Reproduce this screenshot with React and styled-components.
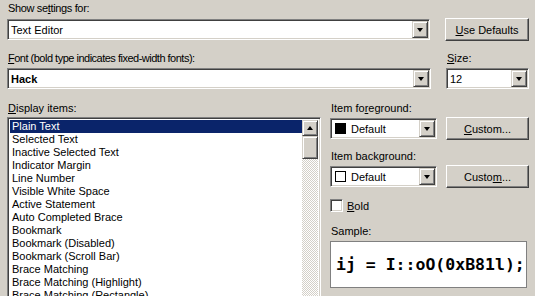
import React from "react";
import styled, { createGlobalStyle } from "styled-components";

const Global = createGlobalStyle`
  html, body { margin: 0; padding: 0; background: #d4d0c8; }
  body { width: 535px; height: 296px; overflow: hidden; }
  * { box-sizing: border-box; }
`;

const FONT = `"Liberation Sans", Arial, sans-serif`;

const Page = styled.div`
  width: 535px;
  height: 296px;
  overflow: hidden;
  padding: 2px 6px 0 7px;
  font-family: ${FONT};
  font-size: 11px;
  color: #000;
  background: #d4d0c8;
  display: flex;
  flex-direction: column;
`;

const Label = styled.div`
  height: 13px;
  line-height: 13px;
  padding-left: 1px;
  margin-top: ${(p) => p.$mt ?? 0}px;
  margin-bottom: ${(p) => p.$mb ?? 3}px;
  letter-spacing: ${(p) => p.$ls ?? 0}px;
  white-space: nowrap;
`;

const U = styled.span`
  text-decoration: underline;
  text-underline-offset: 1px;
`;

const Row = styled.div`
  display: flex;
  align-items: ${(p) => p.$align || "center"};
  gap: ${(p) => p.$gap ?? 15}px;
  margin-top: ${(p) => p.$mt ?? 0}px;
`;

const Col = styled.div`
  display: flex;
  flex-direction: column;
  flex: ${(p) => (p.$w ? `0 0 ${p.$w}px` : "1 1 auto")};
  min-width: 0;
`;

const ComboBox = styled.div`
  height: 21px;
  width: ${(p) => (p.$w ? `${p.$w}px` : "auto")};
  flex: ${(p) => (p.$w ? "0 0 auto" : "1 1 auto")};
  background: #fff;
  border: 1px solid;
  border-color: #808080 #fff #fff #808080;
  box-shadow: inset 1px 1px #404040, inset -1px -1px #d4d0c8;
  padding: 1px;
  display: flex;
  align-items: center;
`;

const ComboText = styled.div`
  flex: 1;
  padding-left: ${(p) => p.$pl ?? 2}px;
  font-weight: ${(p) => (p.$bold ? 700 : 400)};
  display: flex;
  align-items: center;
  gap: 5px;
  white-space: nowrap;
`;

const DropBtn = styled.div`
  width: 16px;
  height: 17px;
  background: #d4d0c8;
  border: 1px solid;
  border-color: #d4d0c8 #404040 #404040 #d4d0c8;
  box-shadow: inset 1px 1px #fff, inset -1px -1px #808080;
  display: flex;
  align-items: center;
  justify-content: center;
  &::after {
    content: "";
    width: 0;
    height: 0;
    border-left: 3.5px solid transparent;
    border-right: 3.5px solid transparent;
    border-top: 4px solid #000;
    margin-top: 1px;
  }
`;

const Swatch = styled.span`
  width: 11px;
  height: 11px;
  border: 1px solid #000;
  background: ${(p) => p.$color};
  display: inline-block;
`;

const Button = styled.div`
  height: 23px;
  width: ${(p) => p.$w}px;
  flex: 0 0 auto;
  background: #d4d0c8;
  border: 1px solid;
  border-color: #fff #404040 #404040 #fff;
  box-shadow: inset -1px -1px #808080;
  display: flex;
  align-items: center;
  justify-content: center;
  white-space: nowrap;
`;

const ListBox = styled.div`
  flex: 0 0 314px;
  height: 190px;
  background: #fff;
  border: 1px solid;
  border-color: #808080 #fff #fff #808080;
  box-shadow: inset 1px 1px #404040, inset -1px -1px #d4d0c8;
  padding: 2px;
  display: flex;
`;

const Items = styled.div`
  flex: 1;
  display: flex;
  flex-direction: column;
`;

const Item = styled.div`
  height: 13px;
  line-height: 13px;
  padding-left: 2px;
  white-space: nowrap;
  background: ${(p) => (p.$sel ? "#0a246a" : "transparent")};
  color: ${(p) => (p.$sel ? "#fff" : "#000")};
`;

const ScrollBar = styled.div`
  width: 16px;
  display: flex;
  flex-direction: column;
  background-color: #d4d0c8;
  background-image: repeating-conic-gradient(#fff 0 25%, #d4d0c8 0 50%);
  background-size: 2px 2px;
`;

const ScrollBtn = styled.div`
  width: 16px;
  height: ${(p) => p.$h}px;
  background: #d4d0c8;
  border: 1px solid;
  border-color: #d4d0c8 #404040 #404040 #d4d0c8;
  box-shadow: inset 1px 1px #fff, inset -1px -1px #808080;
  display: flex;
  align-items: center;
  justify-content: center;
  ${(p) =>
    p.$arrow
      ? `&::after {
    content: "";
    width: 0; height: 0;
    border-left: 3.5px solid transparent;
    border-right: 3.5px solid transparent;
    border-bottom: 4px solid #000;
    margin-bottom: 1px;
  }`
      : ""}
`;

const Right = styled.div`
  flex: 1;
  display: flex;
  flex-direction: column;
`;

const CheckRow = styled.div`
  display: flex;
  align-items: center;
  gap: 4px;
  margin-top: 11px;
  height: 13px;
`;

const CheckBox = styled.span`
  width: 13px;
  height: 13px;
  background: #fff;
  border: 1px solid;
  border-color: #808080 #fff #fff #808080;
  box-shadow: inset 1px 1px #404040, inset -1px -1px #d4d0c8;
  display: inline-block;
`;

const Sample = styled.div`
  height: 47px;
  width: 197px;
  background: #fff;
  border: 1px solid #808080;
  display: flex;
  align-items: center;
  padding-left: 5px;
  font-family: "DejaVu Sans Mono", monospace;
  font-weight: 700;
  font-size: 16.5px;
  white-space: pre;
`;

const items = [
  "Plain Text",
  "Selected Text",
  "Inactive Selected Text",
  "Indicator Margin",
  "Line Number",
  "Visible White Space",
  "Active Statement",
  "Auto Completed Brace",
  "Bookmark",
  "Bookmark (Disabled)",
  "Bookmark (Scroll Bar)",
  "Brace Matching",
  "Brace Matching (Highlight)",
  "Brace Matching (Rectangle)",
];

export default function App() {
  return (
    <>
      <Global />
      <Page>
        <Label $ls={-0.35}>
          Show se<U>t</U>tings for:
        </Label>
        <Row>
          <ComboBox>
            <ComboText>Text Editor</ComboText>
            <DropBtn />
          </ComboBox>
          <Button $w={84}>
            <span>
              <U>U</U>se Defaults
            </span>
          </Button>
        </Row>

        <Row $mt={11} $align="flex-start">
          <Col>
            <Label $ls={-0.5}>
              <U>F</U>ont (bold type indicates fixed-width fonts):
            </Label>
            <ComboBox>
              <ComboText $bold>Hack</ComboText>
              <DropBtn />
            </ComboBox>
          </Col>
          <Col $w={83}>
            <Label>
              <U>S</U>ize:
            </Label>
            <ComboBox>
              <ComboText>12</ComboText>
              <DropBtn />
            </ComboBox>
          </Col>
        </Row>

        <Row $mt={13} $align="flex-start" $gap={0}>
          <Col $w={323}>
            <Label $mb={2}>
              <U>D</U>isplay items:
            </Label>
            <Row $gap={0}>
              <ListBox>
                <Items>
                  {items.map((t, i) => (
                    <Item key={t} $sel={i === 0}>
                      {t}
                    </Item>
                  ))}
                </Items>
                <ScrollBar>
                  <ScrollBtn $h={16} $arrow />
                  <ScrollBtn $h={23} />
                </ScrollBar>
              </ListBox>
            </Row>
          </Col>
          <Right>
            <Label $mb={2}>
              Item fo<U>r</U>eground:
            </Label>
            <Row $gap={9}>
              <ComboBox $w={107}>
                <ComboText $pl={3}>
                  <Swatch $color="#000" />
                  Default
                </ComboText>
                <DropBtn />
              </ComboBox>
              <Button $w={83}>
                <span>
                  <U>C</U>ustom...
                </span>
              </Button>
            </Row>
            <Label $mb={2} $mt={10}>
              Item back<U>g</U>round:
            </Label>
            <Row $gap={9}>
              <ComboBox $w={107}>
                <ComboText $pl={3}>
                  <Swatch $color="#fff" />
                  Default
                </ComboText>
                <DropBtn />
              </ComboBox>
              <Button $w={83}>
                <span>
                  Custo<U>m</U>...
                </span>
              </Button>
            </Row>
            <CheckRow>
              <CheckBox />
              <span>
                <U>B</U>old
              </span>
            </CheckRow>
            <Label $mb={3} $mt={13}>
              Sample:
            </Label>
            <Sample>ij = I::oO(0xB81l);</Sample>
          </Right>
        </Row>
      </Page>
    </>
  );
}
